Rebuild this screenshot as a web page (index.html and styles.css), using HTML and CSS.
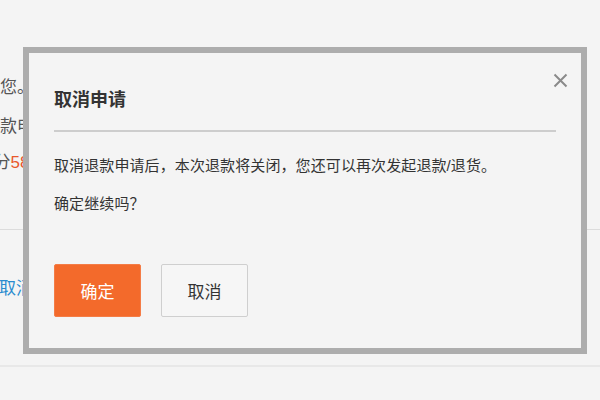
FILE: index.html
```html
<!DOCTYPE html>
<html lang="zh-CN">
<head>
    <meta charset="UTF-8">
    <meta name="viewport" content="width=device-width, initial-scale=1.0">
    <title>取消申请</title>
    <link rel="stylesheet" href="styles.css">
</head>
<body>
    <div class="page">
        <div class="refund-info">
            <div class="info-line line-thanks">感谢您。</div>
            <div class="info-line line-apply">退款申请</div>
            <div class="info-line line-time">剩余5分<span class="countdown">58</span>秒</div>
        </div>
        <div class="refund-actions">
            <a class="link-cancel" href="#">取消申请</a>
        </div>
    </div>

    <div class="dialog">
        <div class="dialog-inner">
            <h3 class="dialog-title">取消申请</h3>
            <span class="dialog-close" title="关闭">
                <svg width="15" height="15" viewBox="0 0 15 15">
                    <path d="M1.5 1.5 L13.5 13.5 M13.5 1.5 L1.5 13.5" stroke="#8a8a8a" stroke-width="2" fill="none"/>
                </svg>
            </span>
            <div class="dialog-body">
                <p>取消退款申请后，本次退款将关闭，您还可以再次发起退款/退货。</p>
                <p>确定继续吗？</p>
            </div>
            <div class="dialog-buttons">
                <button class="btn btn-primary">确定</button>
                <button class="btn btn-default">取消</button>
            </div>
        </div>
    </div>
</body>
</html>
```

FILE: styles.css
```css
body {
    margin: 0;
    padding: 0;
    background-color: #f4f4f4;
    font-family: "Liberation Sans", "Noto Sans CJK SC", sans-serif;
    color: #333;
    overflow: hidden;
}

.page {
    width: 600px;
    height: 400px;
}

.refund-info {
    padding-top: 69px;
    height: 160px;
    border-bottom: 1px solid #dcdcdc;
}

.info-line {
    font-size: 17px;
    line-height: 38px;
    height: 38px;
    color: #555;
    white-space: nowrap;
}

.line-thanks {
    margin-left: -34px;
}

.line-apply {
    margin-left: -17px;
    margin-top: 1px;
}

.line-time {
    margin-left: -50px;
    margin-top: -2px;
}

.countdown {
    color: #e8582c;
}

.refund-actions {
    padding-top: 49px;
    height: 86px;
    border-bottom: 2px solid #e8e8e8;
}

.link-cancel {
    display: block;
    font-size: 17px;
    line-height: 20px;
    color: #2a8ccf;
    text-decoration: none;
    white-space: nowrap;
    margin-left: -1px;
}

.dialog {
    position: absolute;
    left: 23px;
    top: 47px;
    width: 552px;
    height: 295px;
    border: 6px solid #adadad;
    background-color: #f4f4f4;
}

.dialog-inner {
    position: relative;
    height: 100%;
    padding: 35px 25px 0 25px;
    box-sizing: border-box;
}

.dialog-title {
    margin: 0;
    font-size: 18px;
    font-weight: bold;
    line-height: 24px;
    padding-bottom: 18px;
    border-bottom: 2px solid #cdcdcd;
    color: #333;
}

.dialog-close {
    position: absolute;
    left: 524px;
    top: 20px;
    width: 15px;
    height: 15px;
    cursor: pointer;
}

.dialog-close svg {
    display: block;
}

.dialog-body {
    margin-top: 15px;
}

.dialog-body p {
    margin: 0;
    font-size: 15px;
    line-height: 38px;
    letter-spacing: 0.1px;
    color: #333;
    white-space: nowrap;
}

.dialog-buttons {
    display: flex;
    gap: 20px;
    margin-top: 41px;
}

.btn {
    width: 87px;
    height: 53px;
    font-family: "Liberation Sans", "Noto Sans CJK SC", sans-serif;
    font-size: 17px;
    border-radius: 2px;
    cursor: pointer;
    padding: 0;
}

.btn-primary {
    background-color: #f36a2b;
    border: 1px solid #f47c46;
    color: #ffffff;
}

.btn-default {
    background-color: #f6f6f6;
    border: 1px solid #cfcfcf;
    color: #333;
}
```
